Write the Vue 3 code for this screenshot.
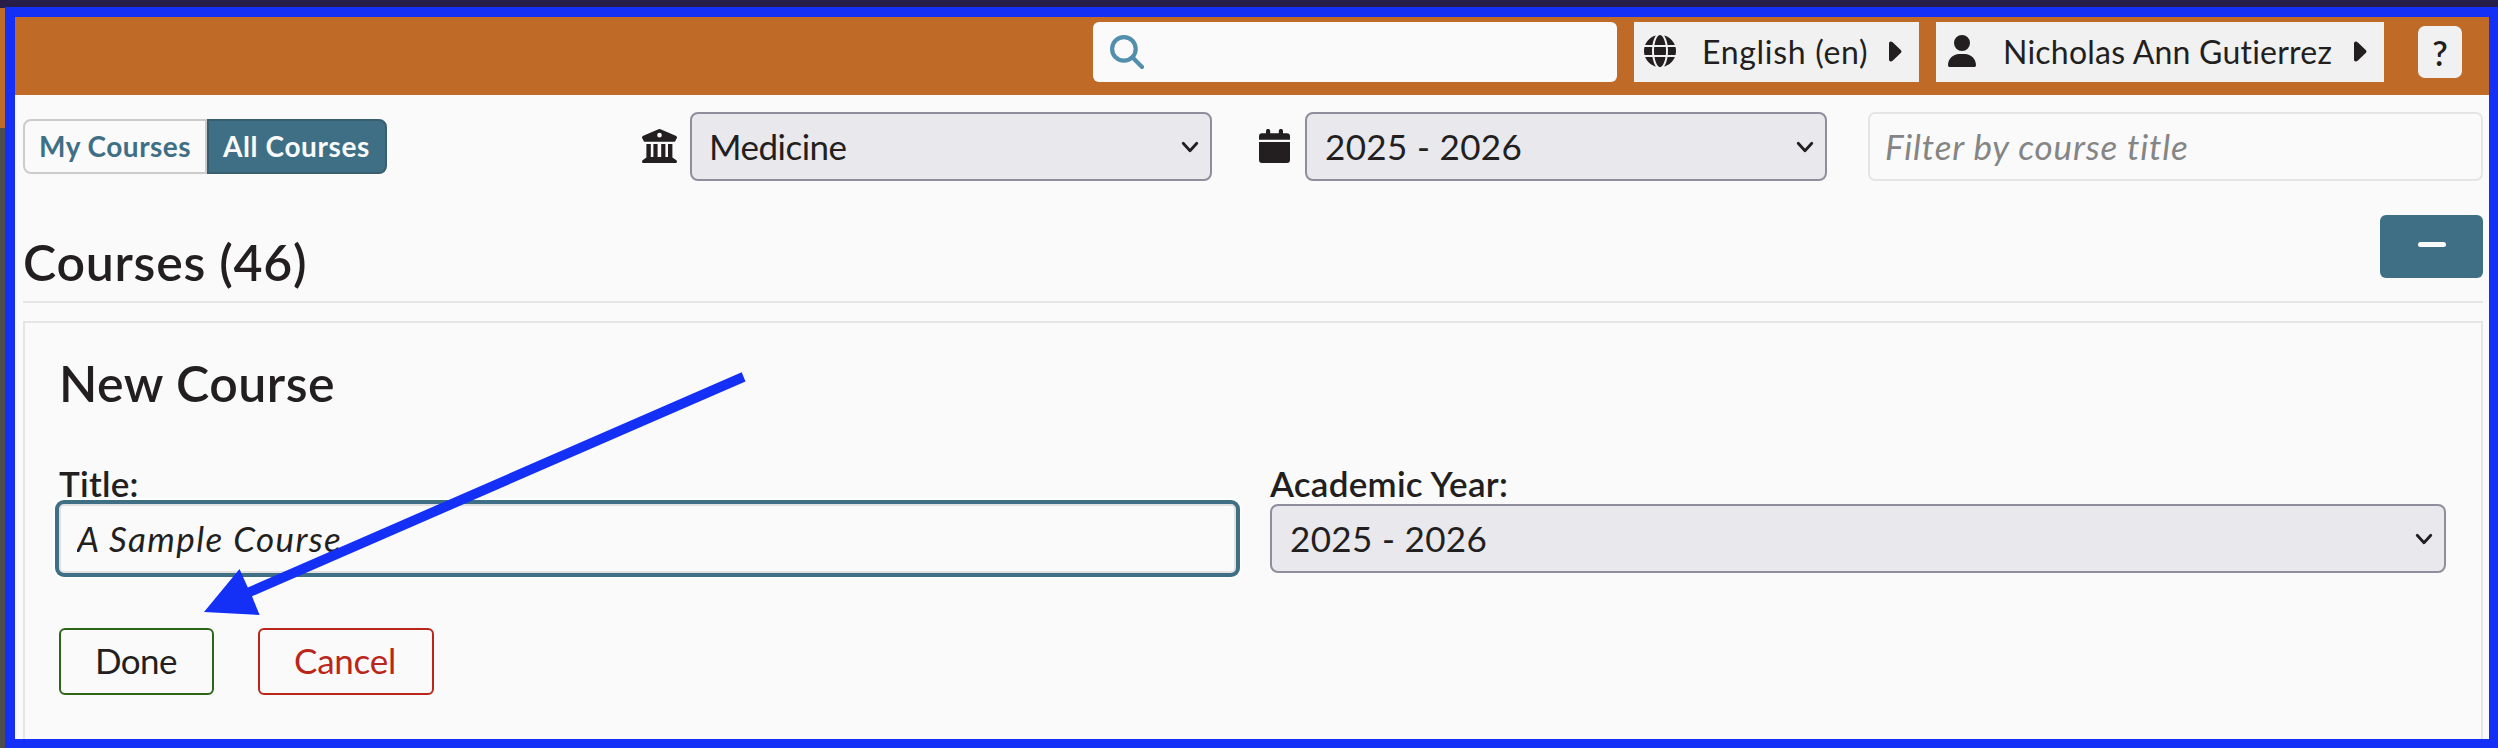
<script setup>
import { ref } from 'vue'

const title = ref('A Sample Course')
const filter = ref('')
const school = ref('Medicine')
const year = ref('2025 - 2026')
const newYear = ref('2025 - 2026')
</script>

<template>
  <div class="screen">
    <div class="app">
      <header class="topbar">
        <div class="search">
          <svg width="34" height="34" viewBox="0 0 34 34">
            <circle cx="13.9" cy="13.9" r="11.8" fill="none" stroke="#528fad" stroke-width="4.2" />
            <path d="M22.6 22.6 32 32" fill="none" stroke="#528fad" stroke-width="4.2" stroke-linecap="round" />
          </svg>
        </div>
        <button class="menu lang">
          <svg width="32" height="32" viewBox="0 0 512 512">
            <path fill="#231f20" d="M352 256c0 22.200-1.200 43.600-3.300 64H163.300c-2.200-20.400-3.300-41.800-3.300-64s1.200-43.600 3.300-64h185.400c2.200 20.400 3.300 41.800 3.300 64zm28.800-64h123.100c5.300 20.500 8.100 41.900 8.100 64s-2.800 43.500-8.100 64H380.800c2.100-20.600 3.200-42 3.200-64s-1.100-43.400-3.200-64zm112.600-32H376.700c-10-63.900-29.800-117.400-55.300-151.600 78.300 20.700 142 77.500 171.900 151.600zm-149.100 0H167.700c6.100-36.400 15.500-68.600 27-94.700 10.500-23.600 22.200-40.700 33.500-51.500C239.400 3.200 248.700 0 256 0s16.600 3.200 27.800 13.800c11.300 10.800 23 27.900 33.500 51.500 11.600 26 20.900 58.200 27 94.700zm-209 0H18.600C48.600 85.900 112.200 29.100 190.600 8.400 165.100 42.600 145.300 96.100 135.300 160zM8.100 192h123.100c-2.100 20.600-3.200 42-3.200 64s1.100 43.400 3.200 64H8.100C2.800 299.500 0 278.100 0 256s2.800-43.500 8.100-64zm186.600 254.600c-11.600-26-20.900-58.200-27-94.600h176.600c-6.100 36.400-15.500 68.600-27 94.600-10.500 23.600-22.200 40.700-33.500 51.500C272.600 508.800 263.300 512 256 512s-16.600-3.200-27.800-13.800c-11.300-10.800-23-27.900-33.500-51.500zM135.300 352c10 63.900 29.800 117.400 55.300 151.600C112.200 482.900 48.600 426.100 18.600 352h116.700zm358.100 0c-30 74.100-93.600 130.900-171.900 151.600 25.500-34.200 45.200-87.700 55.300-151.600h116.600z" />
          </svg>
          <span class="lang-text">English (en)</span>
          <svg class="caret" width="13" height="21" viewBox="0 0 13 21"><path fill="#231f20" d="M0 2.200Q0 .5 1.700.5q1.200 0 2.200 1L12 9.300q1 1.200 0 2.400l-8.100 7.800q-1 1-2.200 1Q0 20.500 0 18.800Z" /></svg>
        </button>
        <button class="menu user">
          <svg width="28" height="32" viewBox="0 0 448 512">
            <path fill="#231f20" d="M224 256a128 128 0 1 0 0-256 128 128 0 1 0 0 256zm-45.700 48C79.800 304 0 383.800 0 482.300 0 498.700 13.300 512 29.700 512h388.600c16.400 0 29.700-13.300 29.700-29.700C448 383.800 368.200 304 269.700 304h-91.400z" />
          </svg>
          <span class="user-text">Nicholas Ann Gutierrez</span>
          <svg class="caret" width="13" height="21" viewBox="0 0 13 21"><path fill="#231f20" d="M0 2.200Q0 .5 1.700.5q1.200 0 2.200 1L12 9.300q1 1.200 0 2.400l-8.100 7.800q-1 1-2.200 1Q0 20.500 0 18.800Z" /></svg>
        </button>
        <button class="help">?</button>
      </header>

      <main class="content">
        <div class="filters">
          <div class="toggle">
            <button class="mine">My Courses</button>
            <button class="all">All Courses</button>
          </div>
          <div class="picker school">
            <svg width="35" height="34" viewBox="0 0 35 34">
              <path fill="#231f20" fill-rule="evenodd" d="M16.500.3q1-.4 2 0L33.700 6.700q1.300.6 1.300 1.900 0 1-.8 1.500l-.7 1.700q-.3 1-1.300 1H2.800q-1 0-1.300-1L.8 10.100Q0 9.600 0 8.600 0 7.300 1.300 6.700ZM17.500 3.800a2.300 2.400 0 1 0 0 4.800 2.300 2.400 0 1 0 0-4.800Z" />
              <path fill="#231f20" d="M4.400 14.900h4.400V28h2.600V14.900h4.200V28h3.600V14.900h4.200V28h2.600V14.900h4.400V28.500l3.700 2.600q.9.600.9 1.600 0 1.300-1.300 1.300H1.300Q0 34 0 32.700q0-1 .9-1.600l3.500-2.600Z" />
            </svg>
            <div class="select">
              <select v-model="school" class="school-select"><option>Medicine</option></select>
              <svg class="chev" width="18" height="13" viewBox="0 0 18 13"><path d="M2.200 2.200 9 9.800l6.800-7.600" /></svg>
            </div>
          </div>
          <div class="picker year">
            <svg width="31" height="34" viewBox="0 0 31 34">
              <path fill="#231f20" d="M7 2a2 2 0 0 1 4.200 0v2.300h8.600V2A2 2 0 0 1 24 2v2.300h4Q31 4.300 31 7.200v3.600H0V7.200Q0 4.300 3 4.300h4ZM0 13h31v18q0 3-3 3H3q-3 0-3-3Z" />
            </svg>
            <div class="select">
              <select v-model="year"><option>2025 - 2026</option></select>
              <svg class="chev" width="18" height="13" viewBox="0 0 18 13"><path d="M2.200 2.200 9 9.800l6.800-7.600" /></svg>
            </div>
          </div>
          <input v-model="filter" class="filter" placeholder="Filter by course title" />
        </div>

        <div class="heading">
          <h2>Courses (46)</h2>
          <button class="collapse">
            <svg width="28" height="5" viewBox="0 0 28 5"><rect width="28" height="5" rx="2.500" fill="#fafafa" /></svg>
          </button>
        </div>

        <section class="panel">
          <h3>New Course</h3>
          <div class="fields">
            <div>
              <label class="title-label">Title:</label>
              <input v-model="title" class="title-input" />
            </div>
            <div>
              <label>Academic Year:</label>
              <div class="select">
                <select v-model="newYear"><option>2025 - 2026</option></select>
                <svg class="chev" width="18" height="13" viewBox="0 0 18 13"><path d="M2.200 2.200 9 9.800l6.800-7.600" /></svg>
              </div>
            </div>
          </div>
          <div class="actions">
            <button class="done">Done</button>
            <button class="cancel">Cancel</button>
          </div>
        </section>
      </main>
    </div>

    <svg class="arrow" width="560" height="260" viewBox="0 0 560 260">
      <path fill="#1430f7" d="M4 252 39.500 209 47.800 227.500 541.700 12.200 545.500 21.500 52 236.300 59.600 255Z" />
    </svg>
    <div class="frame"></div>
  </div>
</template>

<style>
body { margin: 0; }
</style>

<style scoped>
* { box-sizing: border-box; }
.screen {
  position: relative;
  width: 2498px;
  height: 748px;
  overflow: hidden;
  padding: 8px 9px 9px 5px;
  background: linear-gradient(#261d49 0 8px, #bf6a26 8px 128px, #4d4d4d 128px);
  font-family: Lato, "Noto Sans", sans-serif;
  color: #231f20;
  font-variant-ligatures: none;
}
button, input, select {
  font-family: inherit;
  color: inherit;
  margin: 0;
  padding: 0;
  border: 0;
  outline: 0;
  font-variant-ligatures: none;
}
button { display: flex; align-items: center; justify-content: flex-start; text-align: left; white-space: nowrap; }
svg { display: block; flex: none; }
.app { height: 731px; padding-left: 10px; background: #fafafa; overflow: hidden; }
.topbar {
  display: flex;
  justify-content: flex-end;
  height: 87px;
  padding: 14px 27px 0 0;
  background: #bf6a26;
}
.search {
  width: 524px;
  height: 60px;
  padding: 13px 17px;
  border-radius: 6px;
  background: #fafafa;
}
.menu { height: 60px; padding-bottom: 2px; margin-left: 17px; background: #f1f1f1; font-size: 32px; line-height: 40px; }
.lang { width: 285px; padding-left: 10px; }
.user { width: 448px; padding-left: 12px; }
.lang-text { width: 187px; margin-left: 26px; letter-spacing: 0.69px; }
.user-text { width: 351px; margin-left: 27px; letter-spacing: 0.23px; }
.menu span { position: relative; top: 1px; }
.menu > svg { position: relative; top: 0; }
.help {
  width: 44px;
  height: 52px;
  margin: 4px 0 0 34px;
  border-radius: 7px;
  background: #f1f1f1;
  font-size: 34px;
  font-weight: 600;
  justify-content: center;
}
.content { padding: 17px 6px 0 8px; }
.filters { display: flex; height: 69px; }
.toggle { display: flex; width: 619px; height: 55px; margin-top: 7px; }
.toggle button { height: 55px; padding-bottom: 1px; border: 2px solid #ccc; font-size: 28px; font-weight: 700; }
.toggle .mine {
  width: 184px;
  padding-left: 14px;
  border-radius: 8px 0 0 8px;
  background: #fafafa;
  color: #3f6f85;
  letter-spacing: 0.5px;
}
.toggle .all {
  width: 180px;
  padding-left: 14px;
  border-color: #395e70;
  border-radius: 0 8px 8px 0;
  background: #3f6f85;
  color: #fafafa;
  letter-spacing: 0.61px;
}
.picker { display: flex; justify-content: space-between; }
.picker > svg { margin-top: 17px; }
.picker.school { width: 570px; }
.picker.year { width: 568px; margin-left: 47px; }
.select { position: relative; height: 69px; }
.picker .select { width: 522px; }
.select select {
  display: block;
  width: 100%;
  height: 69px;
  padding: 0 50px 2px 18px;
  border: 2px solid #8f8e9d;
  border-radius: 8px;
  background: #e9e8ed;
  font-size: 35px;
  letter-spacing: 0.35px;
  appearance: none;
}
.select .school-select { padding-left: 17px; letter-spacing: -0.5px; }
.chev { position: absolute; right: 13px; top: 29px; fill: none; stroke: #231f20; stroke-width: 2.8; stroke-linecap: round; stroke-linejoin: round; }
.filter {
  width: 615px;
  margin-left: 41px;
  padding: 0 15px 2px;
  border: 2px solid #e5e5e5;
  border-radius: 7px;
  background: #fafafa;
  font-size: 35px;
  font-style: italic;
  letter-spacing: 0.84px;
}
.filter::placeholder { color: #858585; opacity: 1; }
.heading {
  display: flex;
  justify-content: space-between;
  height: 88px;
  margin-top: 34px;
  border-bottom: 2px solid #e5e5e5;
}
h2, h3 { margin: 0; font-size: 50px; line-height: 60px; font-weight: 600; }
h2 { margin-top: 17px; letter-spacing: 0.74px; }
.collapse {
  width: 103px;
  height: 63px;
  padding-bottom: 4px;
  border-radius: 6px;
  background: #3f6f85;
  justify-content: center;
}
.panel {
  height: 460px;
  margin-top: 18px;
  padding: 30px 35px 0 34px;
  border: 2px solid #e5e5e5;
}
h3 { letter-spacing: 0.5px; }
.fields { display: grid; grid-template-columns: 1177px 1176px; gap: 34px; margin-top: 50px; }
label { display: block; height: 41px; font-size: 35px; line-height: 40px; font-weight: 600; letter-spacing: 0.26px; }
.title-input {
  display: block;
  width: 1177px;
  height: 69px;
  padding: 0 16px 2px;
  border: 2px solid #e1e1e1;
  border-radius: 5px;
  background: #fafafa;
  box-shadow: 0 0 0 4px #3f6f85, 0 0 0 6px #fff;
  font-size: 35px;
  font-style: italic;
  letter-spacing: 1.4px;
}
.actions { display: flex; gap: 44px; margin-top: 55px; }
.actions button { height: 67px; padding: 0 0 3px 34px; border: 2px solid #2d6518; border-radius: 6px; background: #fafafa; font-size: 35px; }
.actions .done { width: 155px; letter-spacing: -0.58px; }
.actions .cancel { width: 176px; border-color: #bb261a; color: #bb261a; letter-spacing: -0.24px; }
.arrow { position: absolute; left: 200px; top: 360px; }
.frame {
  position: absolute;
  left: 5px;
  top: 7px;
  right: 0;
  bottom: 0;
  border: 10px solid #1430f7;
  border-width: 10px 9px 9px 10px;
}
</style>
